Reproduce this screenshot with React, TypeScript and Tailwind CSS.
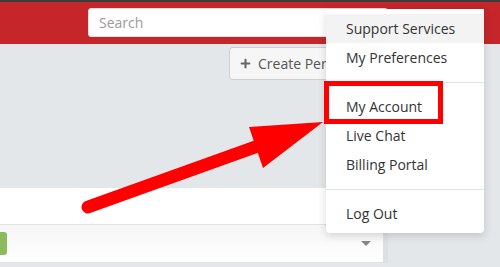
import { FaPlus } from "react-icons/fa";

const menuTop = ["Support Services", "My Preferences"];
const menuMid = ["My Account", "Live Chat", "Billing Portal"];

function MenuItem({ label, active }: { label: string; active?: boolean }) {
  return (
    <div
      className={`h-[29px] pl-[20px] flex items-center text-[14px] text-[#333] ${
        active ? "bg-[#f3f3f3]" : ""
      }`}
    >
      {label}
    </div>
  );
}

function App() {
  return (
    <div className="relative w-[500px] h-[267px] overflow-hidden bg-[#e4e7ea] font-['Open_Sans',sans-serif]">
      <div className="h-[2px] bg-[#3d3d3d]" />
      <header className="h-[42px] bg-[#c4262a] pt-[6px] pl-[88px]">
        <div className="w-[300px] h-[29px] bg-white rounded-[3px] border border-[#e0e0e0] px-[10px] flex items-center text-[14px] text-[#9a9a9a]">
          Search
        </div>
      </header>

      <div className="pl-[229px] pt-[3px]">
        <button className="w-[97px] h-[33px] pl-[10px] flex items-center gap-[7px] overflow-hidden whitespace-nowrap bg-[#f6f6f6] border border-r-0 border-[#cfcfcf] rounded-l-[4px] text-[14px] text-[#555]">
          <FaPlus className="shrink-0 text-[#666] w-[11px] h-[11px]" />
          <span className="overflow-hidden">Create Personal Site</span>
        </button>
      </div>

      <div className="mt-[108px] w-[383px] bg-white border-r-[5px] border-[#dde0e3] box-content">
        <div className="h-[37px] border-b border-[#e3e3e3]" />
        <div className="h-[38px] border-b border-[#e3e3e3] bg-gradient-to-b from-[#f6f6f6] to-white flex items-center justify-between pr-[12px]">
          <div className="w-[7px] h-[23px] bg-[#8bba5f] rounded-r-[3px]" />
          <div className="w-0 h-0 border-l-[5px] border-r-[5px] border-t-[5px] border-l-transparent border-r-transparent border-t-[#888]" />
        </div>
      </div>

      <div className="absolute left-[326px] top-[9px] w-[158px] py-[5px] bg-white rounded-b-[4px] shadow-[0_3px_8px_rgba(0,0,0,0.15)]">
        {menuTop.map((l, i) => (
          <MenuItem key={l} label={l} active={i === 0} />
        ))}
        <div className="mt-[10px] mb-[9px] h-px bg-[#e5e5e5]" />
        {menuMid.map((l) => (
          <MenuItem key={l} label={l} />
        ))}
        <div className="mt-[10px] mb-[9px] h-px bg-[#e5e5e5]" />
        <MenuItem label="Log Out" />
      </div>

      <div className="absolute left-[324px] top-[81px] w-[119px] h-[43px] border-[5px] border-[#ff0000]" />

      <svg className="absolute left-0 top-0" width="500" height="267">
        <line x1="88" y1="207" x2="258" y2="146" stroke="#ff0000" strokeWidth="13" strokeLinecap="round" />
        <polygon points="323,122 249,127 263,168" fill="#ff0000" />
      </svg>
    </div>
  );
}

export default App;
